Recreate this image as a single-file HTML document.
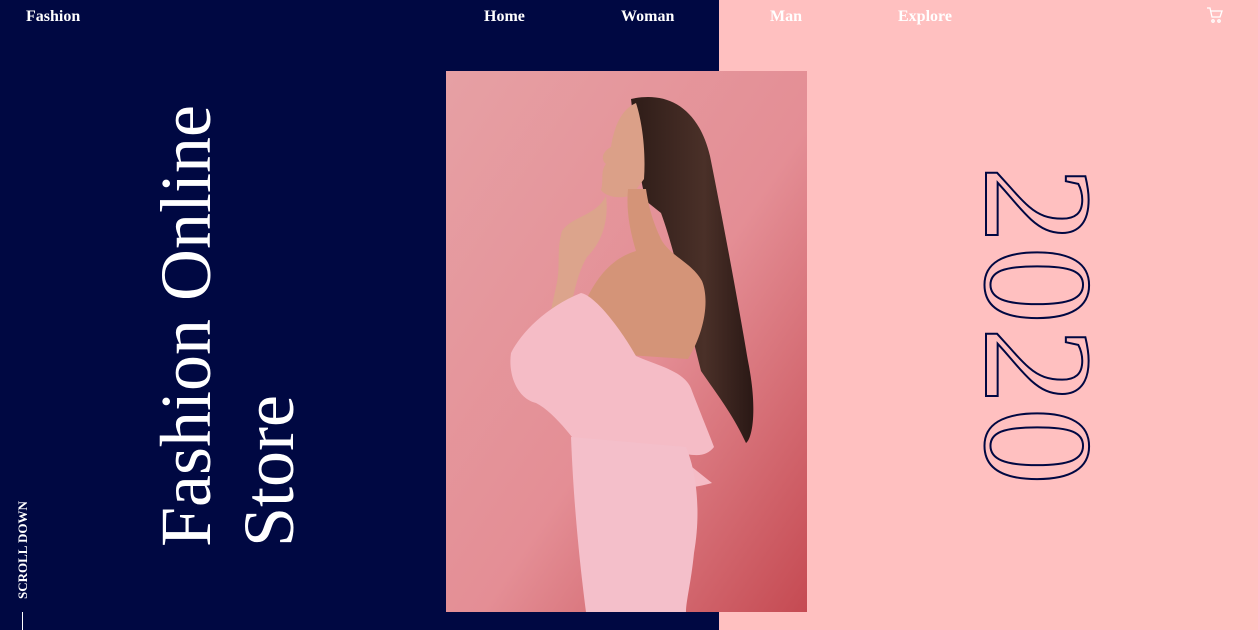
<!DOCTYPE html>
<html><head><meta charset="utf-8"><style>
*{margin:0;padding:0;box-sizing:border-box}
html,body{width:1258px;height:630px;overflow:hidden}
body{background:#000842;font-family:"Liberation Serif",serif}
#w{position:relative;width:1258px;height:630px;overflow:hidden}
.pink{position:absolute;left:719px;top:0;width:539px;height:630px;background:#ffc0c0}
.nav{position:absolute;top:7px;color:#fff;font-weight:bold;font-size:16px;line-height:19px}
.rot{position:absolute;transform:rotate(-90deg);transform-origin:0 0;white-space:nowrap;color:#fff}
.photo{position:absolute;left:446px;top:71px;width:361px;height:541px}
.yr{position:absolute;left:978px;top:166px;writing-mode:vertical-rl;font-size:155px;line-height:120px;letter-spacing:3px;color:transparent;-webkit-text-stroke:2px #000842;font-family:"Liberation Serif",serif}
.line{position:absolute;left:22px;top:612px;width:1px;height:18px;background:#fff}
</style></head><body><div id="w">
<div class="pink"></div>
<div class="nav" style="left:26px">Fashion</div>
<div class="nav" style="left:484px">Home</div>
<div class="nav" style="left:621px">Woman</div>
<div class="nav" style="left:770px">Man</div>
<div class="nav" style="left:898px">Explore</div>
<svg style="position:absolute;left:1206px;top:6px" width="18" height="18" viewBox="0 0 18 18" fill="none" stroke="#fff" stroke-width="1.3"><path d="M1 2h3l2 9h8l2-6H5"/><circle cx="7" cy="15" r="1.2"/><circle cx="13" cy="15" r="1.2"/></svg>
<div class="rot" style="left:145px;top:547px;font-size:72px;line-height:83px;width:460px">Fashion Online<br>Store</div>
<div class="rot" style="left:16px;top:599px;font-size:13px;line-height:13px;font-weight:bold">SCROLL DOWN</div>
<div class="line"></div>
<svg class="photo" viewBox="0 0 361 541" preserveAspectRatio="none">
<defs>
<linearGradient id="bg" x1="0" y1="0" x2="1" y2="1"><stop offset="0" stop-color="#e6a0a4"/><stop offset="0.55" stop-color="#e48e95"/><stop offset="1" stop-color="#c54a52"/></linearGradient>
<linearGradient id="hair" x1="0" y1="0" x2="1" y2="0"><stop offset="0" stop-color="#2e1c18"/><stop offset="0.6" stop-color="#4a3028"/><stop offset="1" stop-color="#2a1815"/></linearGradient>
</defs>
<rect width="361" height="541" fill="url(#bg)"/>
<path d="M185,28 C220,20 252,35 264,85 C276,145 292,230 302,290 C312,340 306,368 300,372 C286,342 270,322 255,300 L245,260 C238,220 226,172 215,142 L200,130 C192,100 190,70 185,28 Z" fill="url(#hair)"/>
<path d="M190,32 C176,38 168,55 165,76 C157,80 154,88 160,93 C154,100 158,110 155,119 C161,127 176,128 186,124 L198,108 C200,80 196,50 190,32 Z" fill="#dba088"/>
<path d="M182,118 C180,140 184,160 190,180 C170,186 155,200 142,225 L150,282 L242,288 C258,262 264,230 256,210 C246,192 226,186 216,170 C206,150 202,132 200,118 Z" fill="#d49478"/>
<path d="M160,125 C150,145 126,145 116,160 C110,180 115,196 110,216 L100,262 L120,266 C125,232 131,202 141,186 C156,171 163,150 160,125 Z" fill="#dca48c"/>
<path d="M65,282 C75,262 100,236 135,222 C150,225 176,260 190,285 C212,295 240,300 246,320 C256,346 266,370 268,376 C260,386 250,386 226,380 L266,412 C230,422 180,422 150,396 C130,372 110,342 90,332 C70,327 62,302 65,282 Z" fill="#f5bcc6"/>
<path d="M125,366 L240,376 C251,402 255,442 248,482 C245,512 240,530 240,541 L140,541 C135,502 128,442 125,366 Z" fill="#f4bfca"/>
</svg>
<div class="yr">2020</div>
</div></body></html>
